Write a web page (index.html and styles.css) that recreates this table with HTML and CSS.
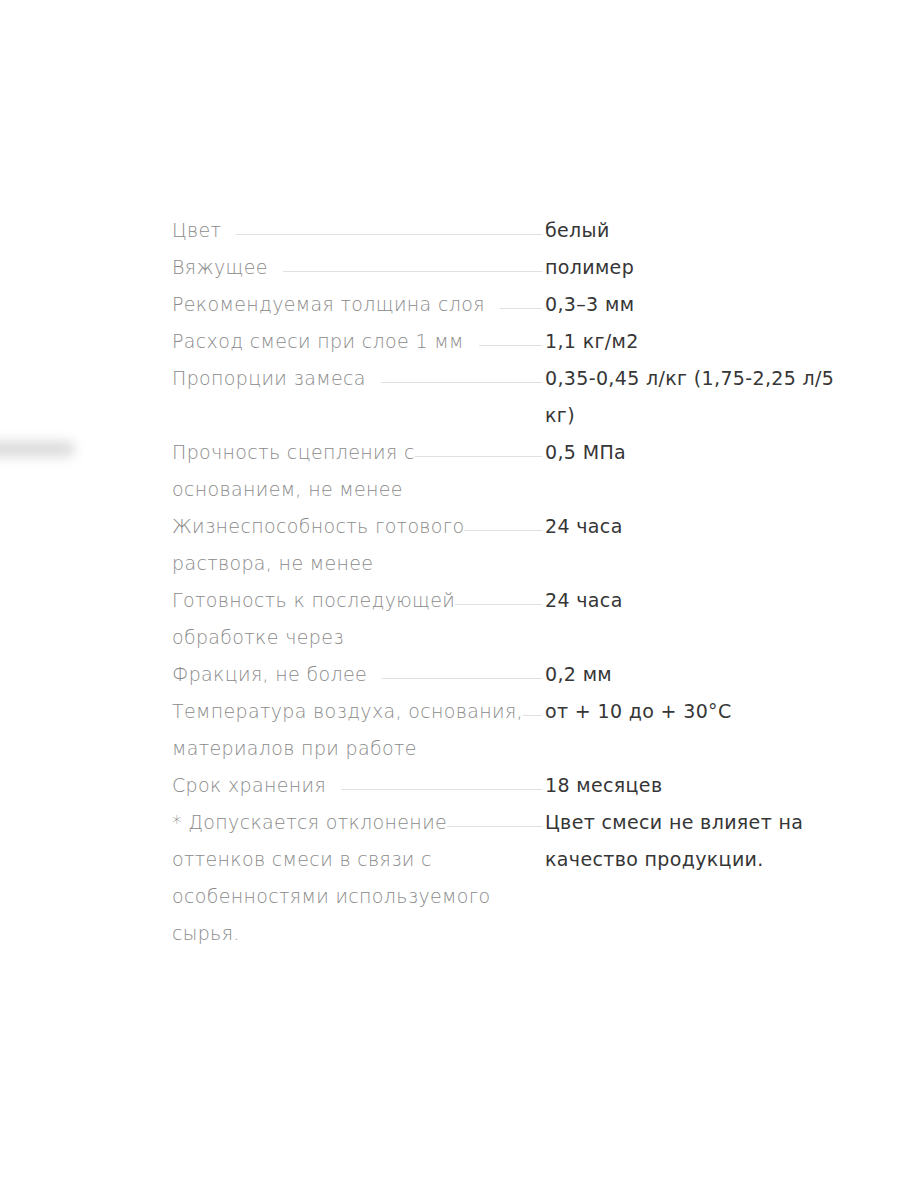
FILE: index.html
```html
<!DOCTYPE html>
<html lang="ru">
<head>
<meta charset="utf-8">
<title>Характеристики</title>
<link rel="stylesheet" href="styles.css">
</head>
<body>
<div class="smudge"></div>
<div class="specs">
  <div class="row"><div class="label"><span>Цвет</span></div><div class="value">белый</div></div>
  <div class="row"><div class="label"><span>Вяжущее</span></div><div class="value">полимер</div></div>
  <div class="row"><div class="label"><span>Рекомендуемая толщина слоя</span></div><div class="value">0,3–3 мм</div></div>
  <div class="row"><div class="label"><span>Расход смеси при слое 1 мм</span></div><div class="value">1,1 кг/м2</div></div>
  <div class="row"><div class="label"><span>Пропорции замеса</span></div><div class="value">0,35-0,45 л/кг (1,75-2,25 л/5 кг)</div></div>
  <div class="row"><div class="label"><span>Прочность сцепления с основанием, не менее</span></div><div class="value">0,5 МПа</div></div>
  <div class="row"><div class="label"><span>Жизнеспособность готового раствора, не менее</span></div><div class="value">24 часа</div></div>
  <div class="row"><div class="label"><span>Готовность к последующей обработке через</span></div><div class="value">24 часа</div></div>
  <div class="row"><div class="label"><span>Фракция, не более</span></div><div class="value">0,2 мм</div></div>
  <div class="row"><div class="label"><span>Температура воздуха, основания, материалов при работе</span></div><div class="value">от + 10 до + 30°C</div></div>
  <div class="row"><div class="label"><span>Срок хранения</span></div><div class="value">18 месяцев</div></div>
  <div class="row"><div class="label"><span>* Допускается отклонение оттенков смеси в связи с особенностями используемого сырья.</span></div><div class="value">Цвет смеси не влияет на качество продукции.</div></div>
</div>
</body>
</html>
```
FILE: styles.css
```css
html, body {
  margin: 0;
  padding: 0;
  background: #ffffff;
}

body {
  position: relative;
  width: 900px;
  height: 1200px;
  overflow: hidden;
  font-family: "DejaVu Sans", "Liberation Sans", sans-serif;
}

.smudge {
  position: absolute;
  left: -20px;
  top: 441px;
  width: 95px;
  height: 16px;
  background: #dcdcdc;
  filter: blur(6px);
  border-radius: 8px;
}

.specs {
  padding: 212px 0 0 172px;
  display: flex;
  flex-direction: column;
}

.row {
  position: relative;
  display: grid;
  grid-template-columns: 373px 300px;
  line-height: 37px;
  font-size: 19px;
  letter-spacing: 0.35px;
}

.row::before {
  content: "";
  position: absolute;
  left: 0;
  width: 370px;
  top: 22px;
  height: 1px;
  background: #e0e0e0;
}

.label {
  position: relative;
  padding-right: 22px;
  color: #8a8a8a;
  font-weight: 200;
}

.label span {
  background: #ffffff;
  padding-right: 15px;
}

.value {
  position: relative;
  color: #363636;
  font-weight: 400;
}
```
